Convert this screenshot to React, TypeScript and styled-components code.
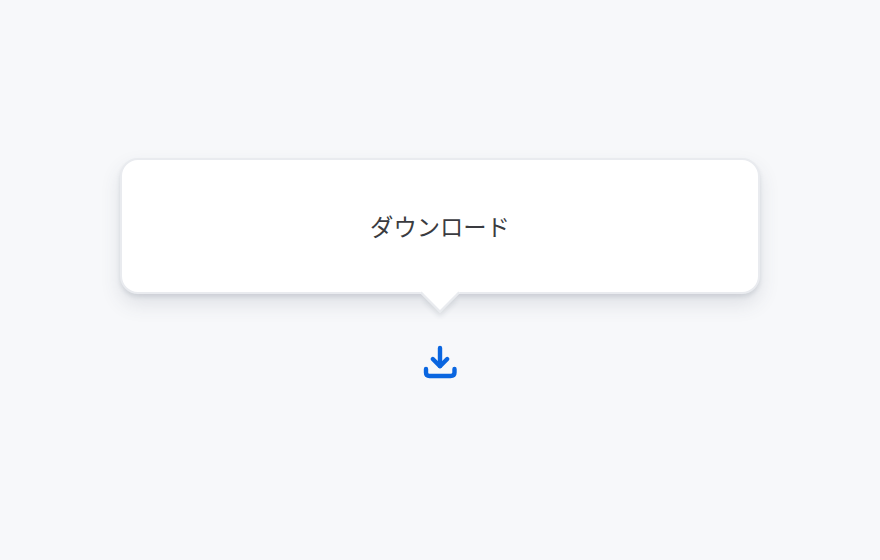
import React from 'react';
import styled, { createGlobalStyle } from 'styled-components';

const GlobalStyle = createGlobalStyle`
  html, body, #root {
    margin: 0;
    height: 100%;
  }

  body {
    background: #f7f8fa;
    font-family: "Noto Sans CJK JP", "Liberation Sans", sans-serif;
  }
`;

const Page = styled.div`
  height: 560px;
  box-sizing: border-box;
  padding-top: 158px;
  display: flex;
  flex-direction: column;
  align-items: center;
  overflow: hidden;
`;

const Bubble = styled.div`
  position: relative;
  width: 640px;
  height: 136px;
  box-sizing: border-box;
  display: flex;
  align-items: center;
  justify-content: center;
  background: #ffffff;
  border: 2px solid #e9ebef;
  border-radius: 18px;
  box-shadow: 0 3px 4px rgba(60, 70, 90, 0.12), 0 10px 20px rgba(60, 70, 90, 0.13);
`;

const Arrow = styled.span`
  position: absolute;
  left: 50%;
  bottom: -15px;
  width: 28px;
  height: 28px;
  margin-left: -14px;
  box-sizing: border-box;
  background: #ffffff;
  border-right: 2px solid #e9ebef;
  border-bottom: 2px solid #e9ebef;
  transform: rotate(45deg);
  box-shadow: 5px 5px 5px -2px rgba(60, 70, 90, 0.12);
`;

const Label = styled.span`
  position: relative;
  font-size: 23.3px;
  line-height: 32px;
  color: #3a3b40;
`;

const IconWrap = styled.div`
  margin-top: 48px;
  width: 40px;
  height: 40px;
  color: #0a66e0;
`;

const DownloadIcon = () => (
  <svg width="40" height="40" viewBox="0 0 40 40" fill="none" stroke="currentColor" strokeWidth="4.4" strokeLinecap="round" strokeLinejoin="round">
    <path d="M20 6V24" />
    <path d="M12.8 17L20 24.2L27.2 17" />
    <path d="M6 27V30.5C6 32.7 7 34 9.5 34H30.5C33 34 34.5 32.7 34.5 30.5V27" />
  </svg>
);

export default function App() {
  return (
    <>
      <GlobalStyle />
      <Page>
        <Bubble>
          <Arrow />
          <Label>ダウンロード</Label>
        </Bubble>
        <IconWrap>
          <DownloadIcon />
        </IconWrap>
      </Page>
    </>
  );
}
